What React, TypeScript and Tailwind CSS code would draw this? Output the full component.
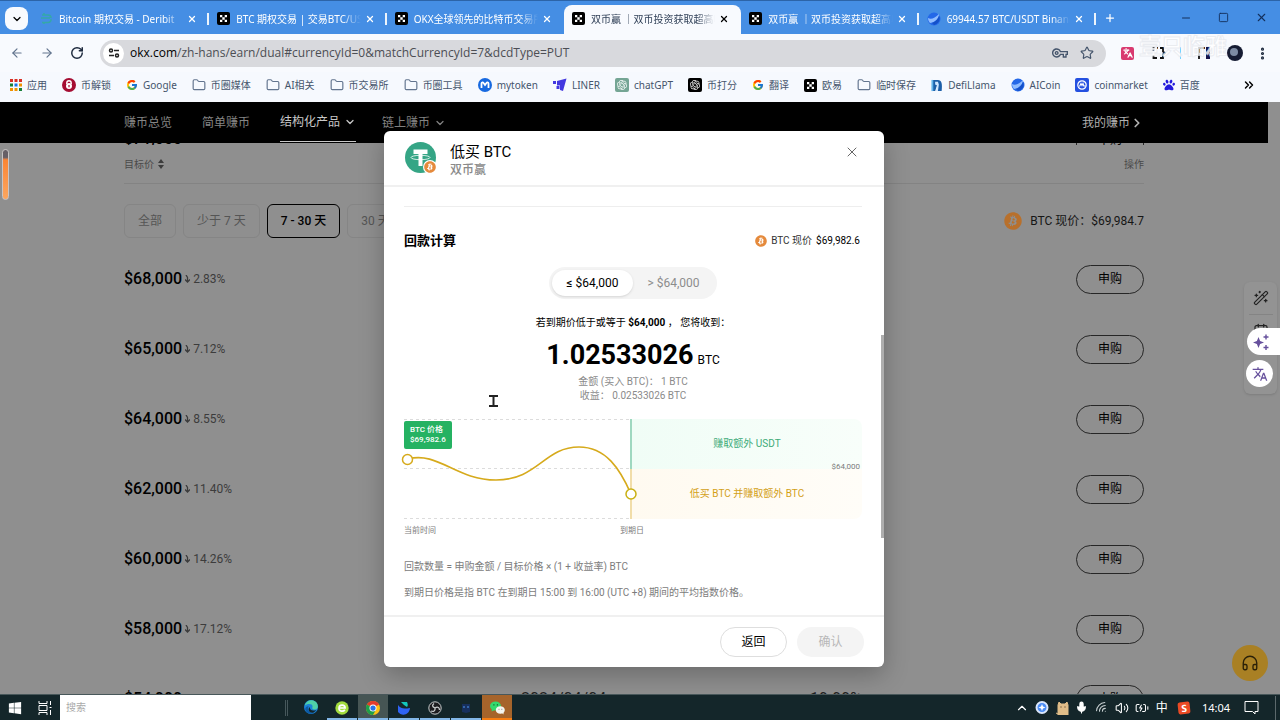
import { useState } from "react";
import type { ReactNode } from "react";
import clsx from "clsx";
import {
  ArrowLeft,
  ArrowRight,
  BatteryCharging,
  Calendar,
  ChevronDown,
  ChevronRight,
  ChevronUp,
  ChevronsRight,
  EllipsisVertical,
  Folder,
  Headphones,
  Languages,
  Mic,
  Minus,
  Plus,
  RotateCw,
  Square,
  Star,
  Volume2,
  WandSparkles,
  Wifi,
  X,
} from "lucide-react";
import { FcGoogle } from "react-icons/fc";
import { FaBitcoin, FaPaw, FaWindows } from "react-icons/fa";
import { MdOutlineVpnKey, MdTranslate } from "react-icons/md";
import { RiOpenaiFill } from "react-icons/ri";

interface Bookmark {
  label: string;
  icon: ReactNode;
}

interface Product {
  price: string;
  diff: string;
  date?: string;
  yieldRate?: string;
}

const OkxIcon = () => (
  <svg viewBox="0 0 13 13" className="size-[13px] shrink-0">
    <rect width="13" height="13" rx="2" fill="#000" />
    <path
      d="M3 3h2.3v2.3H3zM7.7 3H10v2.3H7.7zM5.3 5.3h2.4v2.4H5.3zM3 7.7h2.3V10H3zM7.7 7.7H10V10H7.7z"
      fill="#fff"
    />
  </svg>
);

const DeribitIcon = () => (
  <svg viewBox="0 0 13 13" className="size-[13px] shrink-0" fill="none" stroke="#35a8a8" strokeWidth="1.6">
    <path d="M2 3h6a3 3 0 0 1 3 3M1 6h9M11 7a3 3 0 0 1-3 3.500H2M4 1v2M4 10v2" />
  </svg>
);

const AiCoinIcon = () => (
  <svg viewBox="0 0 14 14" className="size-[14px] shrink-0">
    <circle cx="7" cy="7" r="6.500" fill="#2468e8" />
    <path d="M1 6C4 8 8 6 12 2c0 4-3 8-9 9C2 10 1 8 1 6z" fill="#8fbcff" />
    <path d="M5 11c3-1 6-4 7-7 2 4-1 8-5 9z" fill="#1450c8" />
  </svg>
);

const AppsIcon = () => (
  <svg viewBox="0 0 12 12" className="size-3 shrink-0">
    <path d="M0 0h3v3H0zM4.500 0h3v3h-3zM9 0h3v3H9z" fill="#d93025" />
    <path d="M0 4.500h3v3H0zM9 9h3v3H9z" fill="#188038" />
    <path d="M4.500 4.500h3v3h-3z" fill="#1a73e8" />
    <path d="M9 4.500h3v3H9zM0 9h3v3H0zM4.500 9h3v3h-3z" fill="#f09300" />
  </svg>
);

const UnlockIcon = () => (
  <svg viewBox="0 0 14 14" className="size-[14px] shrink-0">
    <circle cx="7" cy="7" r="7" fill="#a50d32" />
    <path d="M4.800 6V5a2.200 2.200 0 0 1 4.400 0v1" fill="none" stroke="#fff" strokeWidth="1.400" />
    <circle cx="7" cy="8" r="3" fill="#fff" />
    <path d="M6.400 7h1.200v2.200H6.400z" fill="#a50d32" />
  </svg>
);

const MyTokenIcon = () => (
  <svg viewBox="0 0 14 14" className="size-[14px] shrink-0">
    <circle cx="7" cy="7" r="7" fill="#1769e0" />
    <path
      d="M3.500 10V5.500C3.500 4 5 4 5.600 5L7 7l1.400-2c.6-1 2.100-1 2.100.5V10"
      fill="none"
      stroke="#fff"
      strokeWidth="1.800"
    />
  </svg>
);

const LinerIcon = () => (
  <svg viewBox="0 0 14 14" className="size-[14px] shrink-0" fill="#4338e0">
    <path d="M4 3l9.500-2.500L10 13l-3-1V7.500H4zM0 3h3v3H0zM3.500 8h3v3h-3z" />
  </svg>
);

const LlamaIcon = () => (
  <svg viewBox="0 0 12 14" className="h-[13px] w-3 shrink-0">
    <path d="M1 1h6c4 0 5 4 4 12H7l-1-6-2 6H1z" fill="#1d5fa8" />
    <path d="M4 3h3l1 3-1 7H5l1-6-2-1z" fill="#cfe6ff" />
    <path d="M0 1h2v12H0z" fill="#63b4ea" />
  </svg>
);

const CmcIcon = () => (
  <svg viewBox="0 0 14 14" className="size-[14px] shrink-0">
    <rect width="14" height="14" rx="2" fill="#2450e0" />
    <circle cx="7" cy="7" r="4.200" fill="none" stroke="#fff" strokeWidth="1.200" />
    <path d="M4.500 8.500L6 5.500l1 2 1-2 .8 2.500h2" fill="none" stroke="#fff" strokeWidth="1.100" />
  </svg>
);

const FolderIcon = () => <Folder className="size-[14px] shrink-0 text-slate-500" strokeWidth={2} />;

const GptIcon = ({ dark }: { dark?: boolean }) => (
  <span
    className={clsx(
      "flex size-[14px] shrink-0 items-center justify-center rounded-xs text-white",
      dark ? "bg-black" : "bg-[#74a594]"
    )}
  >
    <RiOpenaiFill className="size-3" />
  </span>
);

const ChromeIcon = () => (
  <svg viewBox="0 0 24 24" className="size-[14px]">
    <circle cx="12" cy="12" r="12" fill="#fbc116" />
    <path d="M12 12L1.600 6a12 12 0 0 1 20.800 0z" fill="#e33b2e" />
    <path d="M12 12L1.600 6A12 12 0 0 0 12 24l5-9z" fill="#1e9e4a" />
    <circle cx="12" cy="12" r="6" fill="#fff" />
    <circle cx="12" cy="12" r="4.500" fill="#2a73e8" />
  </svg>
);

const EdgeIcon = () => (
  <svg viewBox="0 0 24 24" className="size-[14px]">
    <circle cx="12" cy="12" r="12" fill="#1b82d8" />
    <path d="M1 10C3 2 10-1 16 1c7 2 9 9 7 13-2 3-8 3-9 0 2-5-1-7-5-7-3 0-6 1-8 3z" fill="#4fd0a8" />
    <path d="M8 11c-3 5 1 12 9 11-7 4-14 0-15-6 0-4 4-6 6-5z" fill="#0c59a4" />
    <path d="M10 12c-1 4 4 8 11 5-2 3-5 5-7 5-6-1-8-7-4-10z" fill="#14252a" />
  </svg>
);

const BrowserEIcon = () => (
  <svg viewBox="0 0 14 14" className="size-[14px]">
    <circle cx="7" cy="7" r="6.700" fill="#a3dc3f" />
    <path
      d="M3.800 7h6.300C10 3.200 4 3.300 4 7.200c0 3.500 4.500 3.700 5.800 1.500"
      fill="none"
      stroke="#fff"
      strokeWidth="1.700"
    />
  </svg>
);

const LarkIcon = () => (
  <svg viewBox="0 0 14 14" className="size-[14px]">
    <path d="M4 1h6c1 2 1 4 0 5C8 5 6 3 4 1z" fill="#13c7bd" />
    <path d="M1 4c3 4 6 4 12 3-1 8-9 8-12 4z" fill="#2f63f5" />
  </svg>
);

const ObsIcon = () => (
  <svg viewBox="0 0 14 14" className="size-[14px]">
    <circle cx="7" cy="7" r="6.200" fill="#1c1c1f" stroke="#c8cccd" />
    <path
      d="M7 7c-3-1-3-3-1-4.500M7 7c3-2 4.500 0 4.500 2M7 7c.5 3-1.500 4-4 3"
      fill="none"
      stroke="#c8cccd"
      strokeWidth="1.300"
    />
  </svg>
);

const RobotIcon = () => (
  <svg viewBox="0 0 14 14" className="size-[14px]">
    <path d="M3 3h8v8l-4 1-4-1z" fill="#172f5d" />
    <path d="M4 5h2v2H4zM8 5h2v2H8z" fill="#3263a8" />
  </svg>
);

const WechatIcon = () => (
  <svg viewBox="0 0 15 14" className="h-[14px] w-[15px]">
    <ellipse cx="5.500" cy="5" rx="5.500" ry="4.600" fill="#33d96e" />
    <path d="M2 8l-.5 2.500L4.500 9z" fill="#33d96e" />
    <ellipse cx="10.300" cy="9" rx="4.500" ry="3.800" fill="#f4f5f0" />
    <path d="M12 12l1.500 1.500V11z" fill="#f4f5f0" />
    <path d="M3.300 3.800h1.200M6.800 3.800H8" stroke="#17602f" strokeWidth="1.200" />
    <path d="M8.500 8.300h1M11.300 8.300h1" stroke="#8a8a80" />
  </svg>
);

const TetherIcon = () => (
  <span className="relative size-[31px] shrink-0">
    <svg viewBox="0 0 31 31" className="size-[31px]">
      <circle cx="15.500" cy="15.500" r="15.500" fill="#35a585" />
      <path d="M8.500 7.500h14V12h-5v12h-4V12h-5z" fill="#fff" />
      <ellipse cx="15.500" cy="15.500" rx="9.500" ry="2.200" fill="none" stroke="#fff" strokeWidth=".8" />
    </svg>
    <span className="absolute -right-px -bottom-px rounded-full bg-white p-px">
      <FaBitcoin className="size-3 text-[#e58a3c]" />
    </span>
  </span>
);

const tabs = [
  { title: "Bitcoin 期权交易 - Deribit", icon: <DeribitIcon /> },
  { title: "BTC 期权交易 | 交易BTC/USD", icon: <OkxIcon /> },
  { title: "OKX全球领先的比特币交易所", icon: <OkxIcon /> },
  { title: "双币赢 ｜双币投资获取超高收益", icon: <OkxIcon /> },
  { title: "双币赢 ｜双币投资获取超高收益", icon: <OkxIcon /> },
  { title: "69944.57 BTC/USDT Binance", icon: <AiCoinIcon /> },
];

const bookmarks: Bookmark[] = [
  { label: "应用", icon: <AppsIcon /> },
  { label: "币解锁", icon: <UnlockIcon /> },
  { label: "Google", icon: <FcGoogle className="size-3 shrink-0" /> },
  { label: "币圈媒体", icon: <FolderIcon /> },
  { label: "AI相关", icon: <FolderIcon /> },
  { label: "币交易所", icon: <FolderIcon /> },
  { label: "币圈工具", icon: <FolderIcon /> },
  { label: "mytoken", icon: <MyTokenIcon /> },
  { label: "LINER", icon: <LinerIcon /> },
  { label: "chatGPT", icon: <GptIcon /> },
  { label: "币打分", icon: <GptIcon dark /> },
  { label: "翻译", icon: <FcGoogle className="size-3 shrink-0" /> },
  { label: "欧易", icon: <OkxIcon /> },
  { label: "临时保存", icon: <FolderIcon /> },
  { label: "DefiLlama", icon: <LlamaIcon /> },
  { label: "AICoin", icon: <AiCoinIcon /> },
  { label: "coinmarket", icon: <CmcIcon /> },
  { label: "百度", icon: <FaPaw className="size-3 shrink-0 text-[#2319dc]" /> },
];

const products: Product[] = [
  { price: "$68,000", diff: "2.83%" },
  { price: "$65,000", diff: "7.12%" },
  { price: "$64,000", diff: "8.55%" },
  { price: "$62,000", diff: "11.40%" },
  { price: "$60,000", diff: "14.26%" },
  { price: "$58,000", diff: "17.12%" },
  { price: "$54,000", diff: "22.83%", date: "2024/04/04", yieldRate: "19.99%" },
];

const terms = ["全部", "少于 7 天", "7 - 30 天", "30 天以上"];

const TabStrip = () => (
  <div className="flex h-[34px] items-end border-t border-[#2c64a8] bg-[#458ee4] text-white">
    <button
      aria-label="搜索标签页"
      className="mb-1 ml-[5px] flex size-[23px] shrink-0 items-center justify-center rounded-lg bg-[#f8fafe] text-black"
    >
      <ChevronDown className="size-3" strokeWidth={2.5} />
    </button>
    <div className="ml-1 flex max-w-[1064px] min-w-0 flex-1 self-stretch pt-1">
      {tabs.map((tab, i) => (
        <div
          key={i}
          className={clsx(
            "relative flex min-w-0 flex-1 items-center px-2 pb-0.5",
            i === 3 && "rounded-t-lg bg-[#f8fafe] text-slate-700"
          )}
        >
          {tab.icon}
          <span className="ml-1.5 min-w-0 flex-1 overflow-hidden mask-r-from-85% text-[10px] leading-4 whitespace-nowrap">
            {tab.title}
          </span>
          <button aria-label="关闭标签页" className={clsx("mx-1 shrink-0", i === 3 && "text-black")}>
            <X className="size-[10px]" strokeWidth={3} />
          </button>
          {i !== 2 && i !== 3 && <span className="absolute top-2 right-0 h-3 w-0.5 bg-white/90" />}
        </div>
      ))}
    </div>
    <button aria-label="新标签页" className="mb-2.5 ml-2 shrink-0">
      <Plus className="size-3" strokeWidth={2.5} />
    </button>
    <div className="mb-2.5 ml-auto flex shrink-0 items-center gap-[26px] pr-3 text-[#14305c]">
      <Minus className="size-3" />
      <Square className="size-[11px]" />
      <X className="size-[13px]" />
    </div>
  </div>
);

const Toolbar = () => (
  <div className="flex h-[38px] items-center bg-[#f8fafe] px-2.5 text-slate-800">
    <button aria-label="后退" className="text-slate-500">
      <ArrowLeft className="size-[14px]" />
    </button>
    <button aria-label="前进" className="ml-4 text-slate-500">
      <ArrowRight className="size-[14px]" />
    </button>
    <button aria-label="刷新" className="ml-4">
      <RotateCw className="size-[14px]" strokeWidth={2.5} />
    </button>
    <div className="ml-4 flex h-[27px] min-w-0 flex-1 items-center rounded-full bg-[#d8d9dd] pr-3 pl-[3px]">
      <span className="flex size-[21px] shrink-0 items-center justify-center rounded-full bg-white">
        <svg viewBox="0 0 12 12" className="size-3" fill="none" stroke="#222" strokeWidth="1.500">
          <circle cx="3" cy="3.500" r="1.500" />
          <path d="M6 3.500h5M1 8.500h5" />
          <circle cx="9" cy="8.500" r="1.500" />
        </svg>
      </span>
      <div className="ml-1.5 min-w-0 flex-1 truncate font-['Open_Sans','Noto_Sans_CJK_SC',sans-serif] text-xs text-[#4c4e54]">
        <span className="text-black">okx.com</span>
        /zh-hans/earn/dual#currencyId=0&amp;matchCurrencyId=7&amp;dcdType=PUT
      </div>
      <MdOutlineVpnKey className="size-4 text-slate-600" />
      <Star className="ml-3 size-[14px] text-slate-600" />
    </div>
    <div className="relative ml-[15px] flex w-[124px] shrink-0 items-center">
      <span className="flex size-[13px] items-center justify-center rounded-xs bg-[#d93a70] text-white">
        <Languages className="size-[10px]" strokeWidth={3} />
      </span>
      <svg viewBox="0 0 14 14" className="ml-[18px] size-[14px]" fill="none" stroke="#111" strokeWidth="1.800">
        <path d="M1.500 5V2h1M5 2h1M8 2h3v3.500l2 1.500-2 1.500V12H8M1.500 9v3H5" />
      </svg>
      <span className="ml-3.5 h-3 w-px bg-sky-300" />
      <svg viewBox="0 0 14 12" className="ml-4 h-3 w-[14px]">
        <path d="M2 12V1h6" fill="none" stroke="#111" strokeWidth="1.800" />
        <path d="M9 0h4v12H9z" fill="#14134a" />
      </svg>
      <span className="ml-4 size-4 shrink-0 rounded-full bg-[#161c33] p-[3px]">
        <span className="block size-2 rounded-sm bg-[#7d8ba3]" />
      </span>
      <span className="absolute -top-3 left-[18px] text-[22px] leading-6 font-bold whitespace-nowrap text-white/80 [-webkit-text-stroke:1px_#dfe2e899]">
        壹只临雅
      </span>
    </div>
    <button aria-label="更多" className="ml-2.5">
      <EllipsisVertical className="size-[15px]" strokeWidth={3} />
    </button>
  </div>
);

const BookmarkBar = () => (
  <div className="flex h-[30px] items-center bg-[#f6f9fe] pr-6 pb-1 pl-2.5 text-slate-600">
    <div className="flex max-w-[1190px] min-w-0 flex-1 justify-between">
      {bookmarks.map((item) => (
        <a key={item.label} href="#" className="flex items-center gap-[5px] text-[10px] leading-4 whitespace-nowrap">
          {item.icon}
          {item.label}
        </a>
      ))}
    </div>
    <ChevronsRight className="ml-auto size-[14px] text-black" strokeWidth={2.5} />
  </div>
);

const SiteNav = () => (
  <nav className="mr-3 h-[41px] bg-black text-xs text-[#858585]">
    <div className="mx-auto flex h-full max-w-[1020px] items-stretch">
      <a href="#" className="flex items-center">
        赚币总览
      </a>
      <a href="#" className="ml-[30px] flex items-center">
        简单赚币
      </a>
      <a href="#" className="mb-px ml-[30px] flex items-center gap-1 border-b border-[#c8c8c8] text-[#c8c8c8]">
        结构化产品
        <ChevronDown className="size-3" strokeWidth={2.5} />
      </a>
      <a href="#" className="ml-[26px] flex items-center gap-1">
        链上赚币
        <ChevronDown className="size-3" strokeWidth={2.5} />
      </a>
      <a href="#" className="ml-auto flex items-center text-[#b0b0b0]">
        我的赚币
        <ChevronRight className="size-[14px]" strokeWidth={3} />
      </a>
    </div>
  </nav>
);

const ProductRow = ({ price, diff, date, yieldRate }: Product) => (
  <div className="flex h-[70px] shrink-0 items-center">
    <div className="flex w-[397px] items-center">
      <span className="text-base font-medium text-black">{price}</span>
      <svg viewBox="0 0 5 8" className="mx-[3px] h-2 w-[5px]" fill="none" stroke="#3c3c3c" strokeWidth="1.300">
        <path d="M1 0l1.500 2.500V7M0 4.500l2.500 2.500L5 4.500" />
      </svg>
      <span className="text-xs text-[#3c3c3c]">{diff}</span>
    </div>
    {date && <span className="w-[289px] text-base text-[#222]">{date}</span>}
    {yieldRate && <span className="text-base text-[#222]">{yieldRate}</span>}
    <button className="ml-auto h-[29px] w-[68px] rounded-full border border-[#262626] text-xs text-black">申购</button>
  </div>
);

const PriceChart = () => (
  <div className="mt-4">
    <div className="flex h-[100px]">
      <div className="relative z-10 w-[228px] shrink-0">
        <svg viewBox="0 0 228 100" className="h-[100px] w-[228px] overflow-visible" fill="none">
          <path d="M0 .5h226M0 49.500h226M0 99.500h226" stroke="#dcdcdc" strokeDasharray="3 3" />
          <path d="M227 0v50" stroke="#7fcbab" strokeWidth="1.500" />
          <path d="M227 50v50" stroke="#ecd28c" strokeWidth="1.500" />
          <path
            d="M4 40C34 32 52 61 92 61C134 61 140 28 175 28C202 28 216 50 227 75"
            stroke="#d6aa1c"
            strokeWidth="1.600"
          />
          <circle cx="3.500" cy="40.500" r="5" fill="#fff" stroke="#d6aa1c" strokeWidth="1.500" />
          <circle cx="227" cy="75" r="5" fill="#fff" stroke="#c9b013" strokeWidth="1.500" />
        </svg>
        <div className="absolute top-0.5 left-0 w-12 rounded-xs bg-[#25b262] px-1.5 py-1 text-[8px] leading-[10px] font-medium whitespace-nowrap text-white">
          BTC 价格
          <br />
          $69,982.6
        </div>
      </div>
      <div className="relative grid flex-1 grid-rows-2 text-[10px]">
        <div className="flex items-center justify-center rounded-tr-lg bg-linear-to-r from-[#f0fdf6] to-[#f8fefa] text-[#3dab78]">
          赚取额外 USDT
        </div>
        <div className="flex items-center justify-center rounded-br-lg bg-linear-to-r from-[#fffaf0] to-[#fffdf8] text-[#d3a017]">
          低买 BTC 并赚取额外 BTC
        </div>
        <span className="absolute top-[42px] right-0.5 text-[8px] leading-3 text-[#7c7c7c]">$64,000</span>
      </div>
    </div>
    <div className="mt-1 flex h-4 w-60 items-center justify-between text-[8px] text-[#7c7c7c]">
      <span>当前时间</span>
      <span>到期日</span>
    </div>
  </div>
);

const SettlementDialog = () => {
  const [scenario, setScenario] = useState<"below" | "above">("below");

  return (
    <div
      role="dialog"
      aria-label="低买 BTC"
      className="relative flex h-[536px] w-[500px] flex-col rounded-md bg-white shadow-[0_8px_24px_rgba(0,0,0,0.25)]"
    >
      <div className="flex h-14 shrink-0 items-center border-b-2 border-[#f0f0f0] pr-6 pl-[21px]">
        <TetherIcon />
        <div className="ml-[14px] pt-1">
          <h2 className="text-[15px] leading-5 text-black">低买 BTC</h2>
          <p className="text-xs leading-4 font-medium text-[#8a8a8a]">双币赢</p>
        </div>
        <button aria-label="关闭" className="mb-3 ml-auto text-[#666]">
          <X className="size-4" strokeWidth={1.5} />
        </button>
      </div>

      <div className="min-h-0 flex-1 overflow-hidden pt-[19px] pr-[22px] pl-5">
        <hr className="border-[#eeeeee]" />
        <div className="mt-6 flex h-5 items-center">
          <h3 className="text-[13px] font-bold text-black">回款计算</h3>
          <div className="ml-auto flex items-center text-[10px] text-[#333]">
            <FaBitcoin className="mr-1 size-3 text-[#e58a3c]" />
            BTC 现价
            <span className="mr-0.5 ml-1 text-black">$69,982.6</span>
          </div>
        </div>

        <div className="mx-auto mt-4 flex h-8 w-[168px] rounded-full bg-[#f4f4f4] p-[3px] text-xs">
          <button
            onClick={() => setScenario("below")}
            className={clsx(
              "flex-1 rounded-full",
              scenario === "below" ? "bg-white text-black shadow-sm" : "text-[#8c8c8c]"
            )}
          >
            ≤ $64,000
          </button>
          <button
            onClick={() => setScenario("above")}
            className={clsx(
              "flex-1 rounded-full",
              scenario === "above" ? "bg-white text-black shadow-sm" : "text-[#8c8c8c]"
            )}
          >
            &gt; $64,000
          </button>
        </div>

        <p className="mt-4 text-center text-[10px] leading-4 text-black">
          若到期价低于或等于 <b>$64,000</b> ， 您将收到：
        </p>
        <div className="mt-2 flex items-baseline justify-center gap-1 text-[27px] leading-8 font-bold text-black">
          1.02533026
          <span className="text-xs font-normal">BTC</span>
        </div>
        <div className="mt-1 text-center text-[10px] leading-[14px] text-[#8a8a8a]">
          <p>金额 (买入 BTC)： 1 BTC</p>
          <p>收益： 0.02533026 BTC</p>
        </div>

        <PriceChart />

        <p className="mt-5 text-[10px] leading-4 text-[#7c7c7c]">
          回款数量 = 申购金额 / 目标价格 × (1 + 收益率) BTC
        </p>
        <p className="mt-2.5 text-[10px] leading-4 text-[#7c7c7c]">
          到期日价格是指 BTC 在到期日 15:00 到 16:00 (UTC +8) 期间的平均指数价格。
        </p>
      </div>

      <div className="flex h-[52px] shrink-0 items-center justify-end gap-2.5 border-t-2 border-[#f0f0f0] pr-5 text-xs">
        <button className="h-[30px] w-[67px] rounded-full border border-[#dedede] text-black">返回</button>
        <button disabled className="h-[30px] w-[67px] rounded-full bg-[#f4f4f4] text-[#b8b8b8]">
          确认
        </button>
      </div>

      <span className="absolute top-[204px] right-0 h-[203px] w-[3px] bg-[#aeaeae]" />
      <svg viewBox="0 0 9 12" className="absolute top-[264px] left-[105px] h-3 w-[9px]">
        <path d="M0 1h9M0 11h9M4.500 1v10" stroke="#222" strokeWidth="2" />
      </svg>
    </div>
  );
};

const EarnPage = () => {
  const [term, setTerm] = useState(terms[2]);

  return (
    <main className="relative min-h-0 flex-1 overflow-hidden bg-[#8f8f8f]">
      <SiteNav />
      <div className="mr-3">
        <div className="mx-auto max-w-[1020px]">
          {/* bottom edge of the row that is scrolled under the nav */}
          <div className="flex h-0.5 items-end overflow-hidden">
            <span className="text-base leading-3 font-medium text-black">$71,000</span>
            <span className="ml-auto flex h-2 w-[68px] items-end justify-center border-x border-[#262626] text-xs leading-[10px] text-black">
              申购
            </span>
          </div>
          <div className="flex h-[39px] items-center justify-between border-b border-[#838383] text-[10px] text-[#4a4a4a]">
            <span className="flex items-center gap-1">
              目标价
              <svg viewBox="0 0 6 10" className="h-2.5 w-1.5" fill="#3c3c3c">
                <path d="M3 0l3 4H0zM3 10l3-4H0z" />
              </svg>
            </span>
            <span>操作</span>
          </div>
          <div className="mt-5 mb-1.5 flex h-[34px] items-stretch gap-[7px]">
            {terms.map((item) => (
              <button
                key={item}
                onClick={() => setTerm(item)}
                className={clsx(
                  "rounded-md border px-[13px] text-xs",
                  item === term ? "border-black font-medium text-black" : "border-[#858585] text-[#555]"
                )}
              >
                {item}
              </button>
            ))}
            <span className="ml-auto flex items-center text-xs text-[#161616]">
              <FaBitcoin className="mr-2 size-[18px] text-[#b8702c]" />
              BTC 现价：
              <span>$69,984.7</span>
            </span>
          </div>
          {products.map((product) => (
            <ProductRow key={product.price} {...product} />
          ))}
        </div>
      </div>

      <div className="absolute inset-0 mr-3 flex items-center justify-center pt-px">
        <SettlementDialog />
      </div>

      <span className="absolute top-[47px] left-0.5 h-[51px] w-[7px] rounded-full border border-[#c9c4c4] bg-linear-to-b from-[#665f66] from-15% via-[#fb8532] via-20% to-[#fba65f]" />

      <div className="absolute top-[180px] right-[3px] flex h-28 w-[33px] flex-col items-center rounded-md bg-[#939393] pt-2 text-[#222] shadow-sm">
        <WandSparkles className="size-4" strokeWidth={1.8} />
        <span className="my-2 h-px w-6 bg-[#848484]" />
        <Calendar className="size-4" strokeWidth={1.8} />
      </div>
      <button
        aria-label="AI 助手"
        className="absolute top-[226px] right-0 flex h-[27px] w-[33px] items-center rounded-l-full bg-white pl-1.5 text-[#66509c]"
      >
        <svg viewBox="0 0 16 16" className="size-4" fill="currentColor">
          <path d="M5.500 3l1.600 3.900L11 8.500 7.100 10.100 5.500 14 3.900 10.100 0 8.500l3.900-1.600z" />
          <path d="M12.300.5h1.400v1.800h1.800v1.400h-1.800v1.800h-1.400V3.700h-1.800V2.300h1.800zM12.300 11h1.400v1.800h1.800v1.400h-1.800V16h-1.400v-1.800h-1.800v-1.400h1.800z" />
        </svg>
      </button>
      <button
        aria-label="翻译"
        className="absolute top-[258px] right-[7px] flex size-[27px] items-center justify-center rounded-full bg-white text-[#66509c]"
      >
        <MdTranslate className="size-4" />
      </button>
      <button
        aria-label="客服"
        className="absolute right-3 bottom-[13px] flex size-9 items-center justify-center rounded-full bg-[#a98024] text-[#2b2008]"
      >
        <Headphones className="size-[18px]" strokeWidth={1.8} />
      </button>
    </main>
  );
};

const taskApps = [
  { name: "Edge", icon: <EdgeIcon />, style: "" },
  { name: "浏览器", icon: <BrowserEIcon />, style: "border-[#83b7e8]" },
  { name: "Chrome", icon: <ChromeIcon />, style: "bg-[#465554] border-[#83b7e8]" },
  { name: "飞书", icon: <LarkIcon />, style: "border-[#83b7e8]" },
  { name: "OBS", icon: <ObsIcon />, style: "border-[#83b7e8]" },
  { name: "机器人", icon: <RobotIcon />, style: "border-[#83b7e8]" },
  { name: "微信", icon: <WechatIcon />, style: "bg-[#a6642b] border-[#f77d12]" },
];

const Taskbar = () => (
  <footer className="flex h-[26px] shrink-0 items-stretch border-t border-[#48575a] bg-[#14262a] text-white">
    <button aria-label="开始" className="flex w-[29px] items-center justify-center">
      <FaWindows className="size-[14px]" />
    </button>
    <button aria-label="任务视图" className="flex w-[31px] items-center justify-center">
      <svg viewBox="0 0 14 14" className="size-[14px]" fill="none" stroke="#fff">
        <path d="M1 4.500h8v5H1zM1 0v2.500h8V0M1 14v-2.500h8V14M12.500 0v4M12.500 9v5M11.500 6.500h2" />
      </svg>
    </button>
    <input
      aria-label="搜索"
      placeholder="搜索"
      className="w-[191px] bg-white pl-1.5 text-[10px] text-black outline-none placeholder:text-[#aaa]"
    />
    <span className="mr-2 ml-[34px] h-4 w-[3px] self-center border-x border-[#46575b]" />
    <div className="flex gap-px">
      {taskApps.map((app) => (
        <button
          key={app.name}
          aria-label={app.name}
          className={clsx(
            "flex w-[30px] items-center justify-center",
            app.style ? "border-b-2 pt-0.5" : "pb-0.5",
            app.style
          )}
        >
          {app.icon}
        </button>
      ))}
    </div>
    <div className="ml-auto flex items-center pr-1">
      <span className="flex w-5 justify-center">
        <ChevronUp className="size-[14px]" />
      </span>
      <span className="flex w-5 justify-center">
        <svg viewBox="0 0 14 14" className="size-[14px]">
          <circle cx="7" cy="6.500" r="5.500" fill="#4a8cf4" stroke="#dbe7fb" strokeWidth="2" />
          <path d="M7 3l1 2.500L10.500 6.500 8 7.500 7 10 6 7.500 3.500 6.500 6 5.500z" fill="#fff" />
        </svg>
      </span>
      <span className="flex w-5 justify-center">
        <svg viewBox="0 0 14 14" className="size-[14px]">
          <path d="M3 14V4l1-3 2 2h4l2-2 1 3v10zM3 13l-2-1" fill="#e0bd88" stroke="#e0bd88" />
          <path d="M5.500 6h1M9.500 6h1" stroke="#3a2a14" />
        </svg>
      </span>
      <span className="flex w-5 justify-center">
        <Mic className="size-[13px]" fill="currentColor" />
      </span>
      <span className="flex w-5 justify-center">
        <Wifi className="size-[14px] -rotate-45 text-[#c8d0d2]" strokeWidth={1.8} />
      </span>
      <span className="flex w-5 justify-center">
        <Volume2 className="size-[14px]" strokeWidth={1.8} />
      </span>
      <span className="flex w-5 justify-center">
        <BatteryCharging className="size-[14px]" strokeWidth={1.8} />
      </span>
      <span className="flex w-5 justify-center text-xs leading-4">中</span>
      <span className="mr-2 ml-1.5 flex size-3 -rotate-6 items-center justify-center rounded-xs bg-[#ea4a24] text-[10px] leading-3 font-bold">
        S
      </span>
      <span className="ml-1 text-[11px] leading-4">14:04</span>
      <svg viewBox="0 0 15 15" className="ml-3.5 size-[15px]" fill="none" stroke="#fff">
        <path d="M1 1.500h13v10h-3v2.500l-2.500-2.500H1z" />
      </svg>
      <span className="ml-4 h-6 w-px bg-[#5c696c]" />
    </div>
  </footer>
);

const App = () => {
  return (
    <div className="flex h-screen flex-col overflow-hidden bg-[#f8fafe]">
      <header className="shrink-0 font-['Noto_Sans','Noto_Sans_CJK_SC',sans-serif]">
        <TabStrip />
        <Toolbar />
        <BookmarkBar />
      </header>
      <div className="flex min-h-0 flex-1 flex-col font-[Roboto,'Noto_Sans_CJK_SC',sans-serif]">
        <EarnPage />
      </div>
      <div className="font-['Noto_Sans','Noto_Sans_CJK_SC',sans-serif]">
        <Taskbar />
      </div>
    </div>
  );
};

export default App;
